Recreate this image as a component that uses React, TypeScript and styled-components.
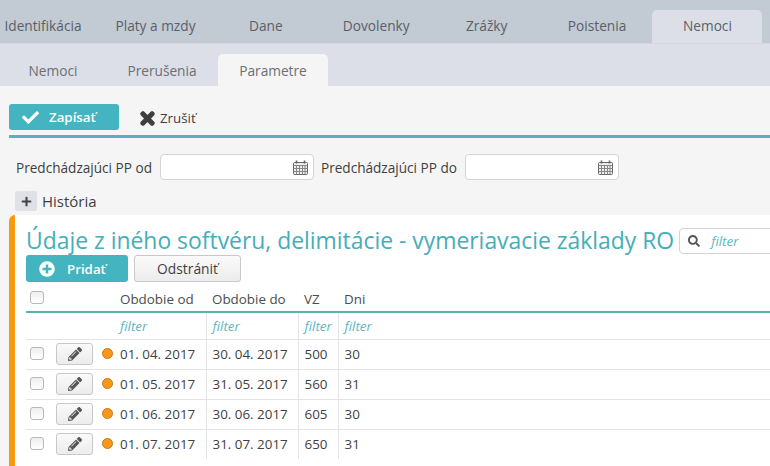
import React from "react";
import styled, { createGlobalStyle } from "styled-components";
import { FaCheck, FaTimes, FaPencilAlt, FaSearch, FaPlusCircle, FaPlus } from "react-icons/fa";

const Global = createGlobalStyle`
  html, body { margin: 0; padding: 0; width: 770px; height: 466px; overflow: hidden; background: #f5f5f5; }
  body, input, button { font-family: "Open Sans", sans-serif; }
`;

const Page = styled.div`
  width: 770px;
  height: 466px;
  overflow: hidden;
  background: #f5f5f5;
`;

const MainTabs = styled.div`
  height: 43px;
  background: #c2cad4;
  border-bottom: 1px solid #d2d7e0;
  box-sizing: content-box;
  display: flex;
  align-items: flex-end;
  gap: 0.4px;
  overflow: hidden;
`;

const MainTab = styled.div<{ $active?: boolean; $first?: boolean }>`
  width: 110px;
  flex-shrink: 0;
  height: 33px;
  margin-left: ${(p) => (p.$first ? "-12px" : "0")};
  margin-right: ${(p) => (p.$first ? "2.1px" : "0")};
  display: flex;
  align-items: center;
  justify-content: center;
  padding-bottom: 3px;
  box-sizing: border-box;
  font-size: 13.7px;
  color: #5a5f67;
  border-radius: 5px 5px 0 0;
  background: ${(p) => (p.$active ? "#dcdfe7" : "transparent")};
`;

const SubTabs = styled.div`
  height: 42px;
  background: #dcdfe7;
  display: flex;
  align-items: flex-end;
`;

const SubTab = styled.div<{ $active?: boolean; $width: number }>`
  width: ${(p) => p.$width}px;
  height: 32px;
  display: flex;
  align-items: center;
  justify-content: center;
  font-size: 13.7px;
  color: #6a6f77;
  border-radius: 5px 5px 0 0;
  background: ${(p) => (p.$active ? "#f5f5f5" : "transparent")};
`;

const Toolbar = styled.div`
  margin: 0 0 0 9px;
  padding-top: 18px;
  height: 31px;
  box-sizing: content-box;
  border-bottom: 3px solid #55b3bc;
  display: flex;
  align-items: flex-start;
`;

const SaveButton = styled.div`
  width: 110px;
  height: 26px;
  background: #44b5c0;
  border-radius: 3px;
  color: #fff;
  display: flex;
  align-items: center;
  font-size: 13.3px;
  font-weight: 600;
  padding-left: 13px;
  box-sizing: border-box;
  gap: 10px;
`;

const CancelButton = styled.div`
  display: flex;
  align-items: center;
  height: 28px;
  margin-left: 19px;
  gap: 3px;
  font-size: 13.3px;
  color: #3f3f3f;
`;

const FormRow = styled.div`
  display: flex;
  align-items: center;
  padding: 16px 0 0 16px;
  height: 26px;
  box-sizing: content-box;
  font-size: 13.6px;
  color: #3f3f3f;
`;

const DateBox = styled.div`
  width: 154px;
  height: 26px;
  box-sizing: border-box;
  background: #fff;
  border: 1px solid #d4d4d4;
  border-radius: 4px;
  margin: 0 7px 0 8px;
  display: flex;
  align-items: center;
  justify-content: flex-end;
  padding-right: 5px;
`;

const HistoryRow = styled.div`
  display: flex;
  align-items: center;
  margin: 11px 0 0 15px;
  height: 20px;
  gap: 5px;
  font-size: 15px;
  color: #3f3f3f;
`;

const Expander = styled.div`
  width: 22px;
  height: 20px;
  background: #dfe1e6;
  border-radius: 2px;
  display: flex;
  align-items: center;
  justify-content: center;
  color: #444;
`;

const Panel = styled.div`
  margin: 4px 0 0 9px;
  height: 300px;
  background: #fff;
  border-left: 6px solid #f79a10;
  border-top-left-radius: 6px;
  padding-left: 11px;
`;

const TitleRow = styled.div`
  display: flex;
  align-items: center;
  padding-top: 12px;
  height: 28px;
  box-sizing: content-box;
  white-space: nowrap;
`;

const Title = styled.h1`
  margin: 0;
  font-size: 22.9px;
  line-height: 28px;
  font-weight: 400;
  color: #45aeb7;
`;

const SearchBox = styled.div`
  margin-left: 5px;
  width: 120px;
  height: 26px;
  flex-shrink: 0;
  box-sizing: border-box;
  border: 1px solid #d4d4d4;
  border-radius: 4px;
  background: #fff;
  display: flex;
  align-items: center;
  padding-left: 8px;
  gap: 11px;
  color: #555;
`;

const FilterText = styled.span`
  font-style: italic;
  font-size: 13.4px;
  color: #5db6bf;
`;

const ButtonRow = styled.div`
  display: flex;
  gap: 6px;
`;

const AddButton = styled.div`
  width: 102px;
  height: 27px;
  background: #44b5c0;
  border-radius: 3px;
  color: #fff;
  display: flex;
  align-items: center;
  font-size: 13.3px;
  font-weight: 600;
  padding-left: 13px;
  box-sizing: border-box;
  gap: 12px;
`;

const RemoveButton = styled.div`
  width: 107px;
  height: 27px;
  box-sizing: border-box;
  border: 1px solid #c8c8c8;
  border-radius: 3px;
  background: linear-gradient(#fafafa, #ececec);
  display: flex;
  align-items: center;
  justify-content: center;
  font-size: 13.8px;
  color: #3f3f3f;
`;

const Table = styled.table`
  border-collapse: collapse;
  table-layout: fixed;
  width: 744px;
  margin-top: 6px;
  font-size: 13.4px;
  color: #3f3f3f;
`;

const HeadCell = styled.th`
  height: 24px;
  padding: 0 0 2px 6px;
  text-align: left;
  font-weight: 400;
  color: #4c4c4c;
  border-bottom: 2px solid #55b3bc;
  box-sizing: border-box;
`;

const FilterCell = styled.td<{ $line?: boolean }>`
  height: 27px;
  padding: 0 0 0 6px;
  border-bottom: 1px solid #e4e4e4;
  border-left: ${(p) => (p.$line ? "1px solid #e4e4e4" : "none")};
  box-sizing: border-box;
`;

const Cell = styled.td<{ $line?: boolean }>`
  height: 30px;
  padding: 0 0 0 6px;
  border-bottom: 1px solid #e4e4e4;
  border-left: ${(p) => (p.$line ? "1px solid #e4e4e4" : "none")};
  box-sizing: border-box;
`;

const LastRow = styled.tr`
  td { border-bottom: none; }
`;

const Check = styled.span`
  display: block;
  width: 14px;
  height: 13px;
  margin: -2px 0 0 -2px;
  box-sizing: border-box;
  border: 1px solid #b8b8b8;
  border-radius: 3px;
  background: linear-gradient(#eee, #fff);
`;

const EditButton = styled.div`
  width: 37px;
  height: 22px;
  box-sizing: border-box;
  border: 1px solid #c8c8c8;
  border-radius: 3px;
  background: linear-gradient(#fafafa, #ececec);
  display: flex;
  align-items: center;
  justify-content: center;
  color: #555;
`;

const Dot = styled.span`
  display: block;
  width: 11px;
  height: 11px;
  margin: -2px 0 0 -3px;
  box-sizing: border-box;
  border-radius: 50%;
  background: #f7981d;
  border: 1px solid #c97a12;
`;

const Calendar = () => (
  <svg width="15" height="15" viewBox="0 0 15 15" fill="none" stroke="#666" strokeWidth="1">
    <rect x="0.5" y="2.5" width="14" height="12" rx="1" fill="#eee" />
    <path d="M0.5 5.5H14.5M0.5 8.5H14.5M0.5 11.5H14.5M3.5 5.5V14.5M6.5 5.5V14.5M9.5 5.5V14.5M12 5.5V14.5" stroke="#888" />
    <path d="M3.5 0.5V3.5M11.5 0.5V3.5" strokeWidth="1.6" />
  </svg>
);

const rows = [
  ["01. 04. 2017", "30. 04. 2017", "500", "30"],
  ["01. 05. 2017", "31. 05. 2017", "560", "31"],
  ["01. 06. 2017", "30. 06. 2017", "605", "30"],
  ["01. 07. 2017", "31. 07. 2017", "650", "31"],
];

const mainTabs = ["Identifikácia", "Platy a mzdy", "Dane", "Dovolenky", "Zrážky", "Poistenia", "Nemoci"];

export default function App() {
  return (
    <Page>
      <Global />
      <MainTabs>
        {mainTabs.map((t, i) => (
          <MainTab key={t} $first={i === 0} $active={t === "Nemoci"}>{t}</MainTab>
        ))}
      </MainTabs>
      <SubTabs>
        <SubTab $width={106}>Nemoci</SubTab>
        <SubTab $width={112}>Prerušenia</SubTab>
        <SubTab $width={110} $active>Parametre</SubTab>
      </SubTabs>
      <Toolbar>
        <SaveButton><FaCheck size={17} />Zapísať</SaveButton>
        <CancelButton><FaTimes size={19} stroke="currentColor" strokeWidth={40} />Zrušiť</CancelButton>
      </Toolbar>
      <FormRow>
        Predchádzajúci PP od
        <DateBox><Calendar /></DateBox>
        Predchádzajúci PP do
        <DateBox><Calendar /></DateBox>
      </FormRow>
      <HistoryRow>
        <Expander><FaPlus size={11} /></Expander>
        História
      </HistoryRow>
      <Panel>
        <TitleRow>
          <Title>Údaje z iného softvéru, delimitácie - vymeriavacie základy RO</Title>
          <SearchBox><FaSearch size={12} /><FilterText>filter</FilterText></SearchBox>
        </TitleRow>
        <ButtonRow>
          <AddButton><FaPlusCircle size={16} />Pridať</AddButton>
          <RemoveButton>Odstrániť</RemoveButton>
        </ButtonRow>
        <Table>
          <colgroup>
            <col style={{ width: 24 }} />
            <col style={{ width: 49 }} />
            <col style={{ width: 15 }} />
            <col style={{ width: 92 }} />
            <col style={{ width: 92 }} />
            <col style={{ width: 40 }} />
            <col />
          </colgroup>
          <thead>
            <tr>
              <HeadCell><Check /></HeadCell>
              <HeadCell />
              <HeadCell />
              <HeadCell>Obdobie od</HeadCell>
              <HeadCell>Obdobie do</HeadCell>
              <HeadCell>VZ</HeadCell>
              <HeadCell>Dni</HeadCell>
            </tr>
            <tr>
              <FilterCell />
              <FilterCell />
              <FilterCell />
              <FilterCell><FilterText>filter</FilterText></FilterCell>
              <FilterCell $line><FilterText>filter</FilterText></FilterCell>
              <FilterCell $line><FilterText>filter</FilterText></FilterCell>
              <FilterCell $line><FilterText>filter</FilterText></FilterCell>
            </tr>
          </thead>
          <tbody>
            {rows.map((r, i) => {
              const R = i === rows.length - 1 ? LastRow : "tr";
              return (
                <R key={r[0]}>
                  <Cell><Check /></Cell>
                  <Cell><EditButton><FaPencilAlt size={14} /></EditButton></Cell>
                  <Cell><Dot /></Cell>
                  <Cell>{r[0]}</Cell>
                  <Cell $line>{r[1]}</Cell>
                  <Cell $line>{r[2]}</Cell>
                  <Cell $line>{r[3]}</Cell>
                </R>
              );
            })}
          </tbody>
        </Table>
      </Panel>
    </Page>
  );
}
